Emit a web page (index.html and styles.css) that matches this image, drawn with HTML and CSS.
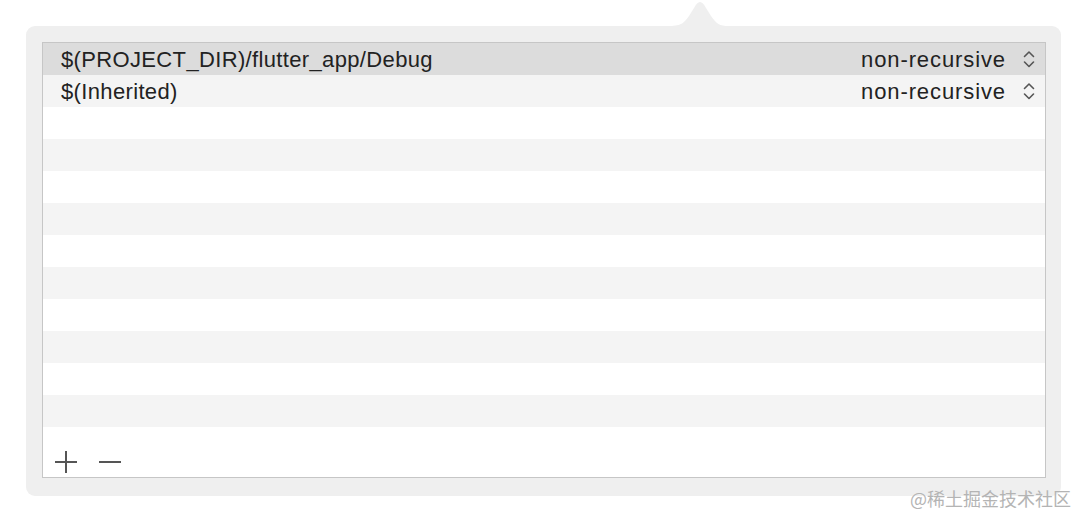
FILE: index.html
```html
<!DOCTYPE html>
<html>
<head>
<meta charset="utf-8">
<link rel="stylesheet" href="styles.css">
</head>
<body>
<div class="stage">
  <div class="popover">
    <svg class="arrow" width="62" height="26" viewBox="0 0 62 26">
      <path d="M0 26 C14 26 16 24 22 16 L27 8 C29 4 31 2 33 2 C35 2 37 4 39 8 L44 16 C50 24 52 26 62 26 Z" fill="#efefef"/>
    </svg>
    <div class="table">
      <div class="rows">
        <div class="row selected"><span class="path">$(PROJECT_DIR)/flutter_app/Debug</span><span class="mode">non-recursive</span><svg class="stepper" width="12" height="19" viewBox="0 0 12 19"><path d="M1.5 6.5 L6 2 L10.5 6.5 M1.5 12 L6 16.5 L10.5 12" fill="none" stroke="#555" stroke-width="1.6" stroke-linecap="round" stroke-linejoin="round"/></svg></div>
        <div class="row alt"><span class="path">$(Inherited)</span><span class="mode">non-recursive</span><svg class="stepper" width="12" height="19" viewBox="0 0 12 19"><path d="M1.5 6.5 L6 2 L10.5 6.5 M1.5 12 L6 16.5 L10.5 12" fill="none" stroke="#555" stroke-width="1.6" stroke-linecap="round" stroke-linejoin="round"/></svg></div>
        <div class="row"></div>
        <div class="row alt"></div>
        <div class="row"></div>
        <div class="row alt"></div>
        <div class="row"></div>
        <div class="row alt"></div>
        <div class="row"></div>
        <div class="row alt"></div>
        <div class="row"></div>
        <div class="row alt"></div>
      </div>
      <div class="footer">
        <svg class="btn" width="22" height="22" viewBox="0 0 22 22"><path d="M0 11 H22 M11 0 V22" stroke="#555" stroke-width="2"/></svg>
        <svg class="btn" width="22" height="22" viewBox="0 0 22 22"><path d="M0 11 H22" stroke="#555" stroke-width="2"/></svg>
      </div>
    </div>
  </div>
  <div class="watermark">@稀土掘金技术社区</div>
</div>
</body>
</html>
```
FILE: styles.css
```css
html, body {
  margin: 0;
  padding: 0;
  background: #ffffff;
}
body {
  width: 1088px;
  height: 522px;
  overflow: hidden;
  font-family: "Liberation Sans", Arial, sans-serif;
}
.stage {
  position: relative;
  width: 1088px;
  height: 522px;
  padding: 26px 0 0 26px;
  box-sizing: border-box;
}
.popover {
  position: relative;
  width: 1035px;
  height: 470px;
  box-sizing: border-box;
  padding: 16px 15px 18px 16px;
  background: #efefef;
  border-radius: 9px;
}
.arrow {
  position: absolute;
  left: 641px;
  top: -26px;
  display: block;
}
.table {
  width: 1004px;
  height: 436px;
  box-sizing: border-box;
  border: 1px solid #c6c6c6;
  background: #ffffff;
  display: flex;
  flex-direction: column;
}
.rows {
  display: flex;
  flex-direction: column;
}
.row {
  height: 32px;
  box-sizing: border-box;
  display: flex;
  align-items: center;
  padding: 2px 10px 0 18px;
  background: #ffffff;
  font-size: 22px;
  color: #222222;
}
.row.alt {
  background: #f4f4f4;
}
.row.selected {
  background: #dcdcdc;
}
.path {
  flex: 1;
  letter-spacing: 0.35px;
}
.mode {
  margin-right: 17px;
  letter-spacing: 0.9px;
}
.stepper {
  display: block;
  margin-top: -1px;
}
.footer {
  flex: 1;
  display: flex;
  align-items: flex-start;
  gap: 22px;
  padding: 24px 0 0 12px;
}
.btn {
  display: block;
}
.watermark {
  position: absolute;
  left: 910px;
  top: 486px;
  font-family: "Noto Sans CJK SC", sans-serif;
  font-size: 18px;
  line-height: 24px;
  color: #b4b4b4;
}
```
